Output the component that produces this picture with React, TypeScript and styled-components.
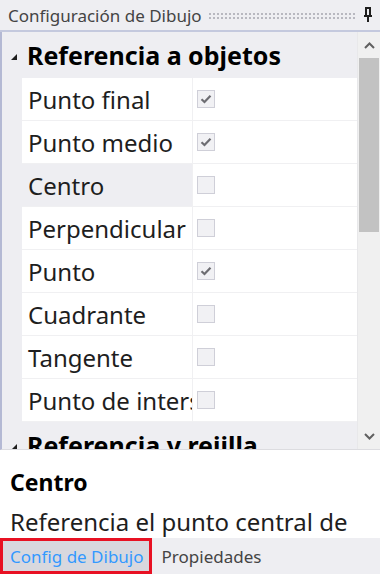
import React from 'react';
import styled, { createGlobalStyle } from 'styled-components';

const GlobalStyle = createGlobalStyle`
  html, body {
    margin: 0;
    padding: 0;
    background: #eeeef2;
  }
  body {
    font-family: "Noto Sans", "Open Sans", sans-serif;
  }
`;

const Panel = styled.div`
  width: 380px;
  height: 574px;
  display: flex;
  flex-direction: column;
  background: #eeeef2;
  overflow: hidden;
`;

const TitleBar = styled.div`
  height: 30px;
  display: flex;
  align-items: center;
  gap: 6px;
  padding: 0 6px 0 8px;
  border-bottom: 2px solid #c4c9de;
  color: #444;
  font-size: 17px;
  white-space: nowrap;
`;

const Grip = styled.div`
  flex: 1;
  height: 7px;
  background-image: radial-gradient(circle, #b8b8c0 0.8px, transparent 1px);
  background-size: 4px 4px;
`;

const Grid = styled.div`
  height: 417px;
  display: flex;
  border-left: 2px solid #b4b9d4;
  border-bottom: 1px solid #dcdce0;
`;

const Rows = styled.div`
  flex: 1;
  overflow: hidden;
  background: #eeeef2;
`;

const Category = styled.div`
  height: 46px;
  flex-shrink: 0;
  display: flex;
  align-items: center;
  gap: 10px;
  padding-left: 9px;
  font-weight: 700;
  font-size: 25px;
  color: #000;
  white-space: nowrap;
`;

const Triangle = styled.span`
  width: 0;
  height: 0;
  border-left: 6px solid transparent;
  border-bottom: 6px solid #1e1e1e;
  margin-top: 4px;
`;

const Row = styled.div`
  height: 43px;
  box-sizing: border-box;
  margin-left: 20px;
  display: grid;
  grid-template-columns: 171px 1fr;
  border-bottom: 1px solid #f0f0f2;
`;

const NameCell = styled.div<{ $selected?: boolean }>`
  display: flex;
  align-items: center;
  padding-left: 6px;
  background: ${p => (p.$selected ? '#eeeef2' : '#fff')};
  border-right: 1px solid #f0f0f2;
  font-size: 24px;
  color: #1e1e1e;
  white-space: nowrap;
  overflow: hidden;
`;

const ValueCell = styled.div`
  display: flex;
  align-items: center;
  padding-left: 4px;
  background: #fff;
`;

const Check = styled.span`
  width: 16px;
  height: 16px;
  border: 1px solid #cfcfd8;
  background: #f1f1f4;
  display: flex;
  align-items: center;
  justify-content: center;
`;

const ScrollBar = styled.div`
  width: 22px;
  display: flex;
  flex-direction: column;
  align-items: center;
  background: #f0f0f0;
  border-left: 1px solid #e8e8ea;
`;

const Arrow = styled.div`
  height: 26px;
  display: flex;
  align-items: center;
  justify-content: center;
`;

const Thumb = styled.div`
  width: 20px;
  height: 174px;
  background: #c2c2c2;
`;

const Spacer = styled.div`
  flex: 1;
`;

const Description = styled.div`
  height: 88px;
  background: #fff;
  padding: 17px 10px 0;
  box-sizing: border-box;
  color: #1e1e1e;
  overflow: hidden;
`;

const DescTitle = styled.div`
  font-weight: 700;
  font-size: 23px;
  line-height: 30px;
  color: #000;
`;

const DescText = styled.div`
  font-size: 24px;
  line-height: 30px;
  margin-top: 10px;
  white-space: nowrap;
`;

const TabBar = styled.div`
  flex: 1;
  display: flex;
  align-items: stretch;
  background: #eeeef2;
`;

const Tab = styled.div<{ $active?: boolean }>`
  display: flex;
  align-items: center;
  padding: 0 5px 0 7px;
  font-size: 17px;
  white-space: nowrap;
  color: ${p => (p.$active ? '#3399ff' : '#444')};
  background: ${p => (p.$active ? '#d8d8de' : 'transparent')};
  border: ${p => (p.$active ? '3px solid #e81123' : '3px solid transparent')};
`;

const CheckMark = () => (
  <svg width="12" height="10" viewBox="0 0 12 10">
    <path d="M1.5 5.2 L4.5 8 L10.5 1.8" fill="none" stroke="#6d6d72" strokeWidth="2.2" />
  </svg>
);

const props = [
  { name: 'Punto final', on: true },
  { name: 'Punto medio', on: true },
  { name: 'Centro', on: false, selected: true },
  { name: 'Perpendicular', on: false },
  { name: 'Punto', on: true },
  { name: 'Cuadrante', on: false },
  { name: 'Tangente', on: false },
  { name: 'Punto de intersección', on: false },
];

export default function App() {
  return (
    <Panel>
      <GlobalStyle />
      <TitleBar>
        <span>Configuración de Dibujo</span>
        <Grip />
        <svg width="12" height="16" viewBox="0 0 12 16">
          <path d="M3 1h6M4 1v8M8 1v8M2 9h8M6 9v6" stroke="#1e1e1e" strokeWidth="2" fill="none" />
        </svg>
      </TitleBar>
      <Grid>
        <Rows>
          <Category>
            <Triangle />
            Referencia a objetos
          </Category>
          {props.map(p => (
            <Row key={p.name}>
              <NameCell $selected={p.selected}>{p.name}</NameCell>
              <ValueCell>
                <Check>{p.on && <CheckMark />}</Check>
              </ValueCell>
            </Row>
          ))}
          <Category>
            <Triangle />
            Referencia y rejilla
          </Category>
        </Rows>
        <ScrollBar>
          <Arrow>
            <svg width="11" height="7" viewBox="0 0 11 7">
              <path d="M1 6 L5.5 1.5 L10 6" fill="none" stroke="#606060" strokeWidth="2" />
            </svg>
          </Arrow>
          <Thumb />
          <Spacer />
          <Arrow>
            <svg width="11" height="7" viewBox="0 0 11 7">
              <path d="M1 1 L5.5 5.5 L10 1" fill="none" stroke="#606060" strokeWidth="2" />
            </svg>
          </Arrow>
        </ScrollBar>
      </Grid>
      <Description>
        <DescTitle>Centro</DescTitle>
        <DescText>Referencia el punto central de</DescText>
      </Description>
      <TabBar>
        <Tab $active>Config de Dibujo</Tab>
        <Tab>Propiedades</Tab>
      </TabBar>
    </Panel>
  );
}
